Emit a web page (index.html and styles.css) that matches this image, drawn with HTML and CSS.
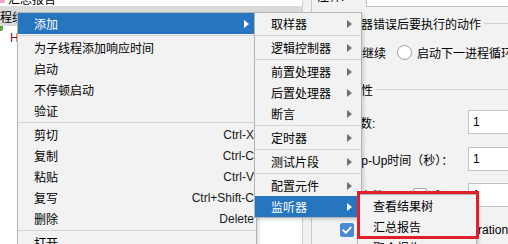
FILE: index.html
```html
<!DOCTYPE html>
<html lang="zh-CN">
<head>
  <meta charset="UTF-8" />
  <meta name="viewport" content="width=device-width, initial-scale=1.0" />
  <title>线程组 - 添加监听器</title>
  <link rel="stylesheet" href="styles.css">
</head>
<body>
  <div class="app">
    <div class="tree">
      <div class="node node-top"><span class="ico ico-pink"></span><span>汇总报告</span></div>
      <div class="node node-selected"><span class="node-text group-name">线程组</span></div>
      <div class="node"><span class="ico ico-green"></span><span class="node-text http">HTTP请求</span></div>
    </div>
    <div class="divider"></div>
    <div class="panel">
      <div class="row row-comment">
        <span class="label comment-label">注释:</span>
        <span class="field"></span>
      </div>

      <div class="group-title">
        <span>在取样器错误后要执行的动作</span>
        <i class="rule"></i>
      </div>
      <div class="radios">
        <span class="radio"></span><span class="radio-label">继续</span>
        <span class="radio"></span><span class="radio-label">启动下一进程循环</span>
        <span class="radio"></span><span class="radio-label">停止线程</span>
      </div>

      <div class="group-title group-title-low">
        <span>线程属性</span>
        <i class="rule"></i>
      </div>
      <div class="row prop prop-threads">
        <span class="label">线程数:</span>
        <span class="field">1</span>
      </div>
      <div class="row prop prop-ramp">
        <span class="label">Ramp-Up时间（秒）：</span>
        <span class="field">1</span>
      </div>
      <div class="row prop prop-loop">
        <span class="label label-short">循环次数</span>
        <span class="check"></span>
        <span class="check-label">永远</span>
        <span class="field">1</span>
      </div>
      <div class="row row-same">
        <span class="check checked">
          <svg width="14" height="14" viewBox="0 0 14 14"><path d="M3.2 7.2 L5.8 9.8 L10.8 4.4" fill="none" stroke="#fff" stroke-width="1.8" stroke-linecap="round" stroke-linejoin="round"/></svg>
        </span>
        <span>Same user on each iteration</span>
      </div>
    </div>
  </div>

  <div class="menu main-menu">
    <div class="item active">添加<span class="arrow"></span></div>
    <div class="sep"></div>
    <div class="item">为子线程添加响应时间</div>
    <div class="item">启动</div>
    <div class="item">不停顿启动</div>
    <div class="item">验证</div>
    <div class="sep"></div>
    <div class="item">剪切<span class="shortcut">Ctrl-X</span></div>
    <div class="item">复制<span class="shortcut">Ctrl-C</span></div>
    <div class="item">粘贴<span class="shortcut">Ctrl-V</span></div>
    <div class="item">复写<span class="shortcut">Ctrl+Shift-C</span></div>
    <div class="item">删除<span class="shortcut">Delete</span></div>
    <div class="sep"></div>
    <div class="item">打开</div>
    <div class="item">合并</div>
  </div>

  <div class="menu sub-menu">
    <div class="item">取样器<span class="arrow"></span></div>
    <div class="sep"></div>
    <div class="item">逻辑控制器<span class="arrow"></span></div>
    <div class="sep"></div>
    <div class="item">前置处理器<span class="arrow"></span></div>
    <div class="item">后置处理器<span class="arrow"></span></div>
    <div class="item">断言<span class="arrow"></span></div>
    <div class="sep"></div>
    <div class="item">定时器<span class="arrow"></span></div>
    <div class="sep"></div>
    <div class="item">测试片段<span class="arrow"></span></div>
    <div class="sep"></div>
    <div class="item">配置元件<span class="arrow"></span></div>
    <div class="item active">监听器<span class="arrow"></span></div>
  </div>

  <div class="menu listener-menu">
    <div class="item">查看结果树</div>
    <div class="item">汇总报告</div>
    <div class="item">聚合报告</div>
  </div>

  <!-- red annotation box round the two listeners -->
  <div class="mark"></div>
</body>
</html>
```

FILE: styles.css
```css
* {
  box-sizing: border-box;
}
body {
  margin: 0;
  width: 508px;
  height: 244px;
  overflow: hidden;
  position: relative;
  font-family: 'Liberation Sans', 'Noto Sans CJK SC', sans-serif;
  font-size: 12px;
  color: #000;
  background: #f2f2f2;
}
.app {
  display: flex;
  height: 244px;
  overflow: hidden;
}

/* tree on the left */
.tree {
  width: 303px;
  flex: none;
  background: #fff;
  border-right: 1px solid #cdcdcd;
  overflow: hidden;
}
.node {
  display: flex;
  align-items: center;
  height: 20px;
  white-space: nowrap;
}
.node-top {
  height: 16px;
  margin-top: -10px;
}
.node-selected {
  background: #dadada;
}
.group-name {
  margin-left: -12px;
}
.ico {
  display: inline-block;
  flex: none;
}
.ico-pink {
  width: 5px;
  height: 10px;
  margin-right: 3px;
  background: #e9a6c8;
  border-radius: 0 0 2px 0;
}
.ico-green {
  width: 3px;
  height: 5px;
  align-self: flex-start;
  background: #5aa83c;
  border-radius: 0 0 2px 0;
}
.http {
  margin-left: 7px;
  color: #7a1024;
}
.divider {
  width: 8px;
  flex: none;
  background: #f2f2f2;
}

/* thread group panel */
.panel {
  flex: 1;
  min-width: 0;
  background: #f2f2f2;
  border-left: 1px solid #c8c8c8;
  padding-left: 5px;
  overflow: hidden;
}
.row {
  display: flex;
  align-items: center;
  white-space: nowrap;
}
.row-comment {
  height: 23px;
  margin-top: -16px;
}
.row-comment .field {
  margin-top: 3px;
}
.comment-label {
  width: 49px;
}
.field {
  flex: 1;
  align-self: stretch;
  display: flex;
  align-items: center;
  margin-right: -4px;
  padding-left: 4px;
  background: #fff;
  border: 1px solid #c2c2c2;
}
.group-title {
  display: flex;
  align-items: center;
  height: 14px;
  margin-top: 9px;
  padding-left: 8px;
  white-space: nowrap;
}
.group-title .rule {
  flex: 1;
  margin-left: 3px;
  border-top: 1px solid #cfcfcf;
}
.group-title-low {
  align-items: flex-start;
  line-height: 14px;
  margin-top: 22px;
}
.group-title-low .rule {
  margin-top: 5px;
}
.radios {
  display: flex;
  align-items: center;
  height: 20px;
  margin-top: 12px;
  padding-left: 25px;
  white-space: nowrap;
}
.radio {
  width: 15px;
  height: 15px;
  flex: none;
  border: 1px solid #9b9b9b;
  border-radius: 50%;
  background: #fff;
  margin-left: 11px;
}
.radio:first-child {
  margin-left: 0;
}
.radio-label {
  margin-left: 5px;
}
.prop {
  height: 24px;
  padding-left: 19px;
}
.prop .label {
  width: 132px;
  flex: none;
}
.prop .label-short {
  width: 77px;
}
.prop-threads {
  margin-top: 12px;
}
.prop-ramp {
  margin-top: 13px;
}
.prop-loop {
  margin-top: 12px;
}
.check {
  width: 14px;
  height: 14px;
  flex: none;
  border: 1px solid #a6a6a6;
  border-radius: 2px;
  background: #fff;
}
.check-label {
  width: 35px;
  flex: none;
  margin-left: 6px;
}
.checked {
  background: #4a8ad3;
  border-color: #4a8ad3;
  display: flex;
}
.checked svg {
  margin: -1px;
}
.row-same {
  height: 20px;
  margin-top: 13px;
  padding-left: 23px;
  gap: 4px;
}

/* popup menus */
.menu {
  position: absolute;
  background: #f2f2f2;
  border: 1px solid #b4b4b4;
  box-shadow: 2px 2px 3px rgba(0, 0, 0, 0.14);
  overflow: hidden;
}
.item {
  display: flex;
  align-items: center;
  height: 21px;
  padding: 0 7px 0 16px;
  white-space: nowrap;
}
.item.active {
  background: #2675bf;
  color: #fff;
}
.sep {
  height: 1px;
  margin: 1px 0;
  background: #d4d4d4;
}
.arrow {
  margin-left: auto;
  width: 0;
  height: 0;
  border-left: 5px solid #707070;
  border-top: 4.5px solid transparent;
  border-bottom: 4.5px solid transparent;
}
.active .arrow {
  border-left-color: #fff;
}
.shortcut {
  margin-left: auto;
  margin-right: -5px;
  color: #1a1a1a;
}
.main-menu {
  left: 17px;
  top: 12px;
  width: 240px;
}
.sub-menu {
  left: 254px;
  top: 12px;
  width: 108px;
}
.sub-menu .item {
  padding-right: 9px;
}
.listener-menu {
  left: 357px;
  top: 194px;
  width: 120px;
  height: 80px;
}
.listener-menu .item {
  padding-left: 15px;
}
.mark {
  position: absolute;
  left: 357px;
  top: 191px;
  width: 122px;
  height: 48px;
  border: 3px solid #e3202a;
}
```
